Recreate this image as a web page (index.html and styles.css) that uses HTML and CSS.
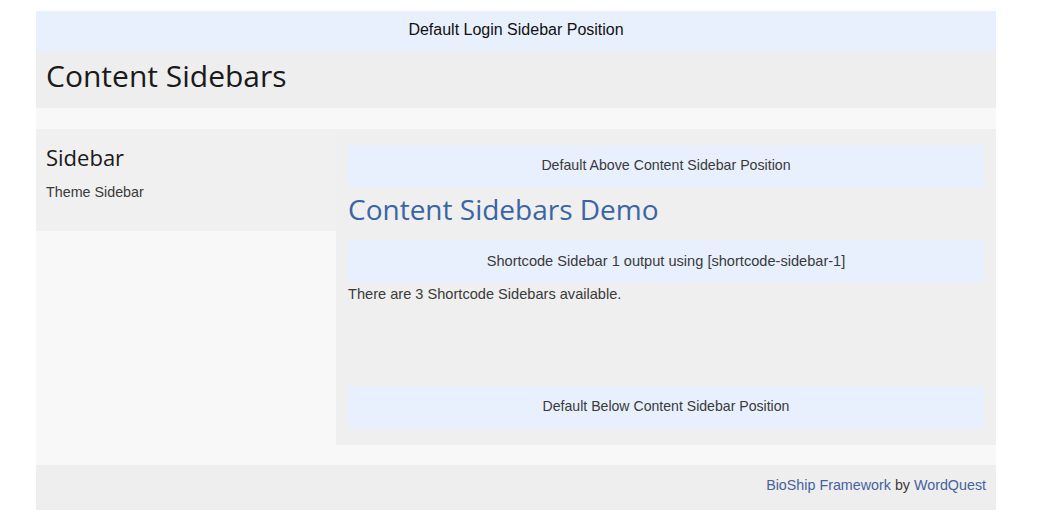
FILE: index.html
```html
<!DOCTYPE html>
<html>
<head>
<meta charset="utf-8">
<link rel="stylesheet" href="styles.css">
</head>
<body>
<div class="page">
  <div class="login-bar">Default Login Sidebar Position</div>
  <header class="site-header"><h1 class="site-title">Content Sidebars</h1></header>
  <div class="main">
    <aside class="sidebar">
      <div class="sidebar-inner">
        <h2 class="sidebar-title">Sidebar</h2>
        <p class="sidebar-text">Theme Sidebar</p>
      </div>
    </aside>
    <section class="content">
      <div class="widget-box above">Default Above Content Sidebar Position</div>
      <h1 class="entry-title">Content Sidebars Demo</h1>
      <div class="widget-box shortcode">Shortcode Sidebar 1 output using [shortcode-sidebar-1]</div>
      <p class="entry-text">There are 3 Shortcode Sidebars available.</p>
      <div class="widget-box below">Default Below Content Sidebar Position</div>
    </section>
  </div>
  <footer class="site-footer"><a href="#" class="link">BioShip Framework</a>&nbsp;by&nbsp;<a href="#" class="link">WordQuest</a></footer>
</div>
</body>
</html>
```
FILE: styles.css
```css
html, body { margin: 0; padding: 0; background: #ffffff; }
body { font-family: "Liberation Sans", Arial, sans-serif; color: #3a3a3a; }
.page {
  width: 960px;
  margin: 11px 0 0 36px;
  background: #f8f8f8;
  display: flex;
  flex-direction: column;
}
.login-bar {
  height: 40px;
  padding-bottom: 2px;
  box-sizing: border-box;
  background: #e8f0fe;
  display: flex;
  align-items: center;
  justify-content: center;
  font-size: 16px;
  color: #111;
}
.site-header {
  height: 57px;
  box-sizing: border-box;
  padding: 0 0 8px 10px;
  background: #eeeeee;
  display: flex;
  align-items: center;
}
.site-title {
  margin: 0;
  font-family: "Open Sans", sans-serif;
  font-weight: 400;
  font-size: 30px;
  color: #1a1a1a;
}
.main {
  margin-top: 21px;
  display: flex;
  align-items: flex-start;
}
.sidebar { width: 300px; }
.sidebar-inner {
  background: #f0f0f0;
  height: 102px;
  padding: 15px 10px 0;
  box-sizing: border-box;
}
.sidebar-title {
  margin: 0;
  font-family: "Open Sans", sans-serif;
  font-weight: 400;
  font-size: 22px;
  line-height: 26px;
  color: #1a1a1a;
}
.sidebar-text { margin: 14px 0 0; font-size: 14.3px; color: #3a3a3a; }
.content {
  width: 660px;
  background: #efefef;
  padding: 16px 12px 16px;
  box-sizing: border-box;
  display: flex;
  flex-direction: column;
}
.widget-box {
  background: #e8f0fe;
  display: flex;
  align-items: center;
  justify-content: center;
  color: #3a3a3a;
  box-sizing: border-box;
}
.above { height: 43px; font-size: 14.2px; padding-bottom: 4px; }
.entry-title {
  margin: 5px 0 0;
  font-family: "Open Sans", sans-serif;
  font-weight: 400;
  font-size: 28px;
  line-height: 32px;
  color: #3a65a5;
}
.shortcode { height: 42px; margin-top: 15px; font-size: 14.6px; }
.entry-text { margin: 3px 0 0; font-size: 14.6px; line-height: 18px; color: #3a3a3a; }
.below { height: 43px; margin-top: 83px; font-size: 14.1px; padding-bottom: 4px; }
.site-footer {
  margin-top: 20px;
  height: 45px;
  box-sizing: border-box;
  padding: 0 10px 6px 0;
  background: #eeeeee;
  display: flex;
  align-items: center;
  justify-content: flex-end;
  font-size: 14.3px;
  color: #3a3a3a;
}
.link { color: #45629e; text-decoration: none; }
```
